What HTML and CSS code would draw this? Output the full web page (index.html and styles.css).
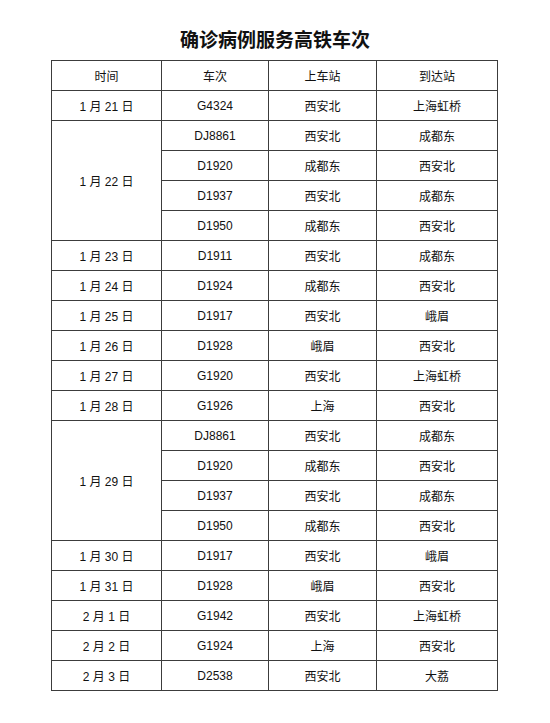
FILE: index.html
```html
<!DOCTYPE html>
<html lang="zh-CN">
<head>
<meta charset="utf-8">
<title>确诊病例服务高铁车次</title>
<link rel="stylesheet" href="styles.css">
</head>
<body>
<div class="page">
<h1 class="title">确诊病例服务高铁车次</h1>
<table class="trains">
<colgroup><col class="c1"><col class="c2"><col class="c3"><col class="c4"></colgroup>
<thead>
<tr><th>时间</th><th>车次</th><th>上车站</th><th>到达站</th></tr>
</thead>
<tbody>
<tr><td>1 月 21 日</td><td>G4324</td><td>西安北</td><td>上海虹桥</td></tr>
<tr><td rowspan="4">1 月 22 日</td><td>DJ8861</td><td>西安北</td><td>成都东</td></tr>
<tr><td>D1920</td><td>成都东</td><td>西安北</td></tr>
<tr><td>D1937</td><td>西安北</td><td>成都东</td></tr>
<tr><td>D1950</td><td>成都东</td><td>西安北</td></tr>
<tr><td>1 月 23 日</td><td>D1911</td><td>西安北</td><td>成都东</td></tr>
<tr><td>1 月 24 日</td><td>D1924</td><td>成都东</td><td>西安北</td></tr>
<tr><td>1 月 25 日</td><td>D1917</td><td>西安北</td><td>峨眉</td></tr>
<tr><td>1 月 26 日</td><td>D1928</td><td>峨眉</td><td>西安北</td></tr>
<tr><td>1 月 27 日</td><td>G1920</td><td>西安北</td><td>上海虹桥</td></tr>
<tr><td>1 月 28 日</td><td>G1926</td><td>上海</td><td>西安北</td></tr>
<tr><td rowspan="4">1 月 29 日</td><td>DJ8861</td><td>西安北</td><td>成都东</td></tr>
<tr><td>D1920</td><td>成都东</td><td>西安北</td></tr>
<tr><td>D1937</td><td>西安北</td><td>成都东</td></tr>
<tr><td>D1950</td><td>成都东</td><td>西安北</td></tr>
<tr><td>1 月 30 日</td><td>D1917</td><td>西安北</td><td>峨眉</td></tr>
<tr><td>1 月 31 日</td><td>D1928</td><td>峨眉</td><td>西安北</td></tr>
<tr><td>2 月 1 日</td><td>G1942</td><td>西安北</td><td>上海虹桥</td></tr>
<tr><td>2 月 2 日</td><td>G1924</td><td>上海</td><td>西安北</td></tr>
<tr><td>2 月 3 日</td><td>D2538</td><td>西安北</td><td>大荔</td></tr>
</tbody>
</table>
</div>
</body>
</html>
```
FILE: styles.css
```css
html, body {
  margin: 0;
  padding: 0;
  background: #ffffff;
}
.page {
  width: 550px;
  padding-top: 27px;
  display: flex;
  flex-direction: column;
  align-items: flex-start;
}
.title {
  margin: 0 0 9px 0;
  width: 550px;
  height: 24px;
  line-height: 24px;
  text-align: center;
  font-family: "Noto Sans CJK SC", sans-serif;
  font-size: 19px;
  font-weight: 700;
  color: #111;
}
.trains {
  margin-left: 51px;
  border-collapse: collapse;
  table-layout: fixed;
  width: 446px;
  font-family: "Liberation Sans", "Noto Sans CJK SC", sans-serif;
  font-size: 12px;
  color: #111;
}
.c1 { width: 110px; }
.c2 { width: 107px; }
.c3 { width: 108px; }
.c4 { width: 121px; }
.trains th,
.trains td {
  border: 1px solid #3c3c3c;
  height: 29px;
  padding: 0;
  text-align: center;
  vertical-align: middle;
  font-weight: 400;
}
```
